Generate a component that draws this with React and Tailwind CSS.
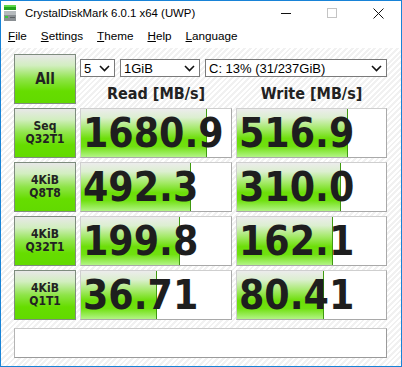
import React from "react";

const ui = "font-['Liberation_Sans',Arial,sans-serif]";
const tah = "font-[family-name:'DejaVu_Sans_Condensed','DejaVu_Sans',sans-serif] font-bold";

const rows = [
  { label: ["Seq", "Q32T1"], read: "1680.9", readBar: 126, write: "516.9", writeBar: 111 },
  { label: ["4KiB", "Q8T8"], read: "492.3", readBar: 110, write: "310.0", writeBar: 104 },
  { label: ["4KiB", "Q32T1"], read: "199.8", readBar: 99, write: "162.1", writeBar: 96 },
  { label: ["4KiB", "Q1T1"], read: "36.71", readBar: 76, write: "80.41", writeBar: 87 },
];

const greenBtn =
  "bg-[image:linear-gradient(to_bottom,#e8e8e8_0%,#d2eec0_22%,#8ee448_50%,#66dd00_75%,#62da00_100%)] border border-[#7e8c7e]";

function Chevron() {
  return (
    <svg width="11" height="7" viewBox="0 0 11 7" className="shrink-0">
      <path d="M1 1 L5.5 5.5 L10 1" fill="none" stroke="#111" strokeWidth="1.6" />
    </svg>
  );
}

function Select({ w, children }) {
  return (
    <div
      className={`${w} h-[18px] border border-[#7a7a7a] bg-white flex items-center justify-between pl-[3px] pr-[4px] text-[13px] text-black ${ui}`}
    >
      <span className="leading-none">{children}</span>
      <Chevron />
    </div>
  );
}

function ValueCell({ value, bar }) {
  return (
    <div className="relative h-[50px] bg-white border border-t-[#cfcfcf] border-l-[#cfcfcf] border-b-[#a9a9a9] border-r-[#a9a9a9] overflow-hidden flex items-center">
      <div
        className="absolute left-0 top-0 bottom-0 border-r border-[#3f9a10] bg-[image:linear-gradient(to_bottom,#ececec_0%,#dcefd0_18%,#a6ea6c_40%,#6cde08_62%,#70e010_78%,#b2f486_100%)]"
        style={{ width: bar }}
      />
      <span className={`relative pl-[2px] text-[40.5px] leading-none text-[#1e1e1e] ${tah}`}>
        {value}
      </span>
    </div>
  );
}

function LabelCell({ lines }) {
  return (
    <div className={`h-[50px] ${greenBtn} flex flex-col items-center justify-center text-[12px] leading-[13px] text-[#222] ${tah}`}>
      <span>{lines[0]}</span>
      <span>{lines[1]}</span>
    </div>
  );
}

function MenuItem({ first, rest }) {
  return (
    <span className="px-[7px]">
      <span className="underline underline-offset-[1px] decoration-1">{first}</span>
      {rest}
    </span>
  );
}

export default function App() {
  return (
    <div className="w-[402px] h-[367px] border border-[#1883d7] bg-white flex flex-col overflow-hidden">
      {/* title bar */}
      <div className="h-[28px] flex items-start shrink-0">
        <svg width="14" height="16" viewBox="0 0 14 16" className="ml-[2px] mt-[4px]">
          <rect x="1" y="0" width="12" height="2" fill="#5fd84a" />
          <rect x="1" y="2" width="12" height="3" fill="#22a41c" />
          <rect x="1" y="6" width="12" height="10" fill="#8a8f93" />
          <rect x="1" y="6" width="12" height="4" fill="#b5babd" />
          <rect x="2" y="11" width="3" height="2" fill="#39c83a" />
          <rect x="7" y="12" width="5" height="1" fill="#5b6063" />
        </svg>
        <span className={`ml-[8px] mt-[6px] text-[11.4px] leading-[13px] text-black ${ui}`}>
          CrystalDiskMark 6.0.1 x64 (UWP)
        </span>
        <div className="ml-auto flex h-full">
          <div className="w-[46px] flex justify-center pt-[12px]">
            <svg width="10" height="1" viewBox="0 0 10 1">
              <rect width="10" height="1" fill="#111" />
            </svg>
          </div>
          <div className="w-[46px] flex justify-center pt-[7px]">
            <svg width="10" height="10" viewBox="0 0 10 10">
              <rect x="0.5" y="0.5" width="9" height="9" fill="none" stroke="#c4c4c4" />
            </svg>
          </div>
          <div className="w-[46px] flex justify-center pt-[7px]">
            <svg width="11" height="11" viewBox="0 0 11 11">
              <path d="M0.5 0.5 L10.5 10.5 M10.5 0.5 L0.5 10.5" stroke="#111" strokeWidth="1" />
            </svg>
          </div>
        </div>
      </div>

      {/* menu bar */}
      <div className={`h-[19px] flex items-start text-[11.7px] leading-[14px] text-black shrink-0 ${ui}`}>
        <MenuItem first="F" rest="ile" />
        <MenuItem first="S" rest="ettings" />
        <MenuItem first="T" rest="heme" />
        <MenuItem first="H" rest="elp" />
        <MenuItem first="L" rest="anguage" />
      </div>

      {/* content */}
      <div className="flex-1 pl-[13px] pt-[6px] bg-[#f7f7f7] bg-[image:repeating-linear-gradient(-45deg,#ffffff_0px,#ffffff_2px,#f1f1f1_2px,#f1f1f1_4px)]">
        <div className="grid grid-cols-[62px_152px_151px] gap-x-[4px] gap-y-[4px]">
          <div className={`h-[50px] ${greenBtn} flex items-center justify-center text-[15px] text-[#222] ${tah}`}>
            All
          </div>
          <div className="col-span-2 h-[50px] flex flex-col">
            <div className="mt-[5px] flex">
              <Select w="w-[36px]">5</Select>
              <div className="ml-[5px]">
                <Select w="w-[80px]">1GiB</Select>
              </div>
              <div className="ml-[5px]">
                <Select w="w-[182px]">C: 13% (31/237GiB)</Select>
              </div>
            </div>
            <div className={`mt-[7px] grid grid-cols-[152px_151px] gap-x-[4px] text-[16px] leading-[19px] text-[#222] ${tah}`}>
              <span className="text-center">Read [MB/s]</span>
              <span className="text-center">Write [MB/s]</span>
            </div>
          </div>

          {rows.map((r, i) => (
            <React.Fragment key={i}>
              <LabelCell lines={r.label} />
              <ValueCell value={r.read} bar={r.readBar} />
              <ValueCell value={r.write} bar={r.writeBar} />
            </React.Fragment>
          ))}
        </div>

        <div className="mt-[8px] w-[373px] h-[30px] bg-white border border-t-[#c8c8c8] border-l-[#b4b4b4] border-b-[#9a9a9a] border-r-[#9a9a9a]" />
      </div>
    </div>
  );
}
